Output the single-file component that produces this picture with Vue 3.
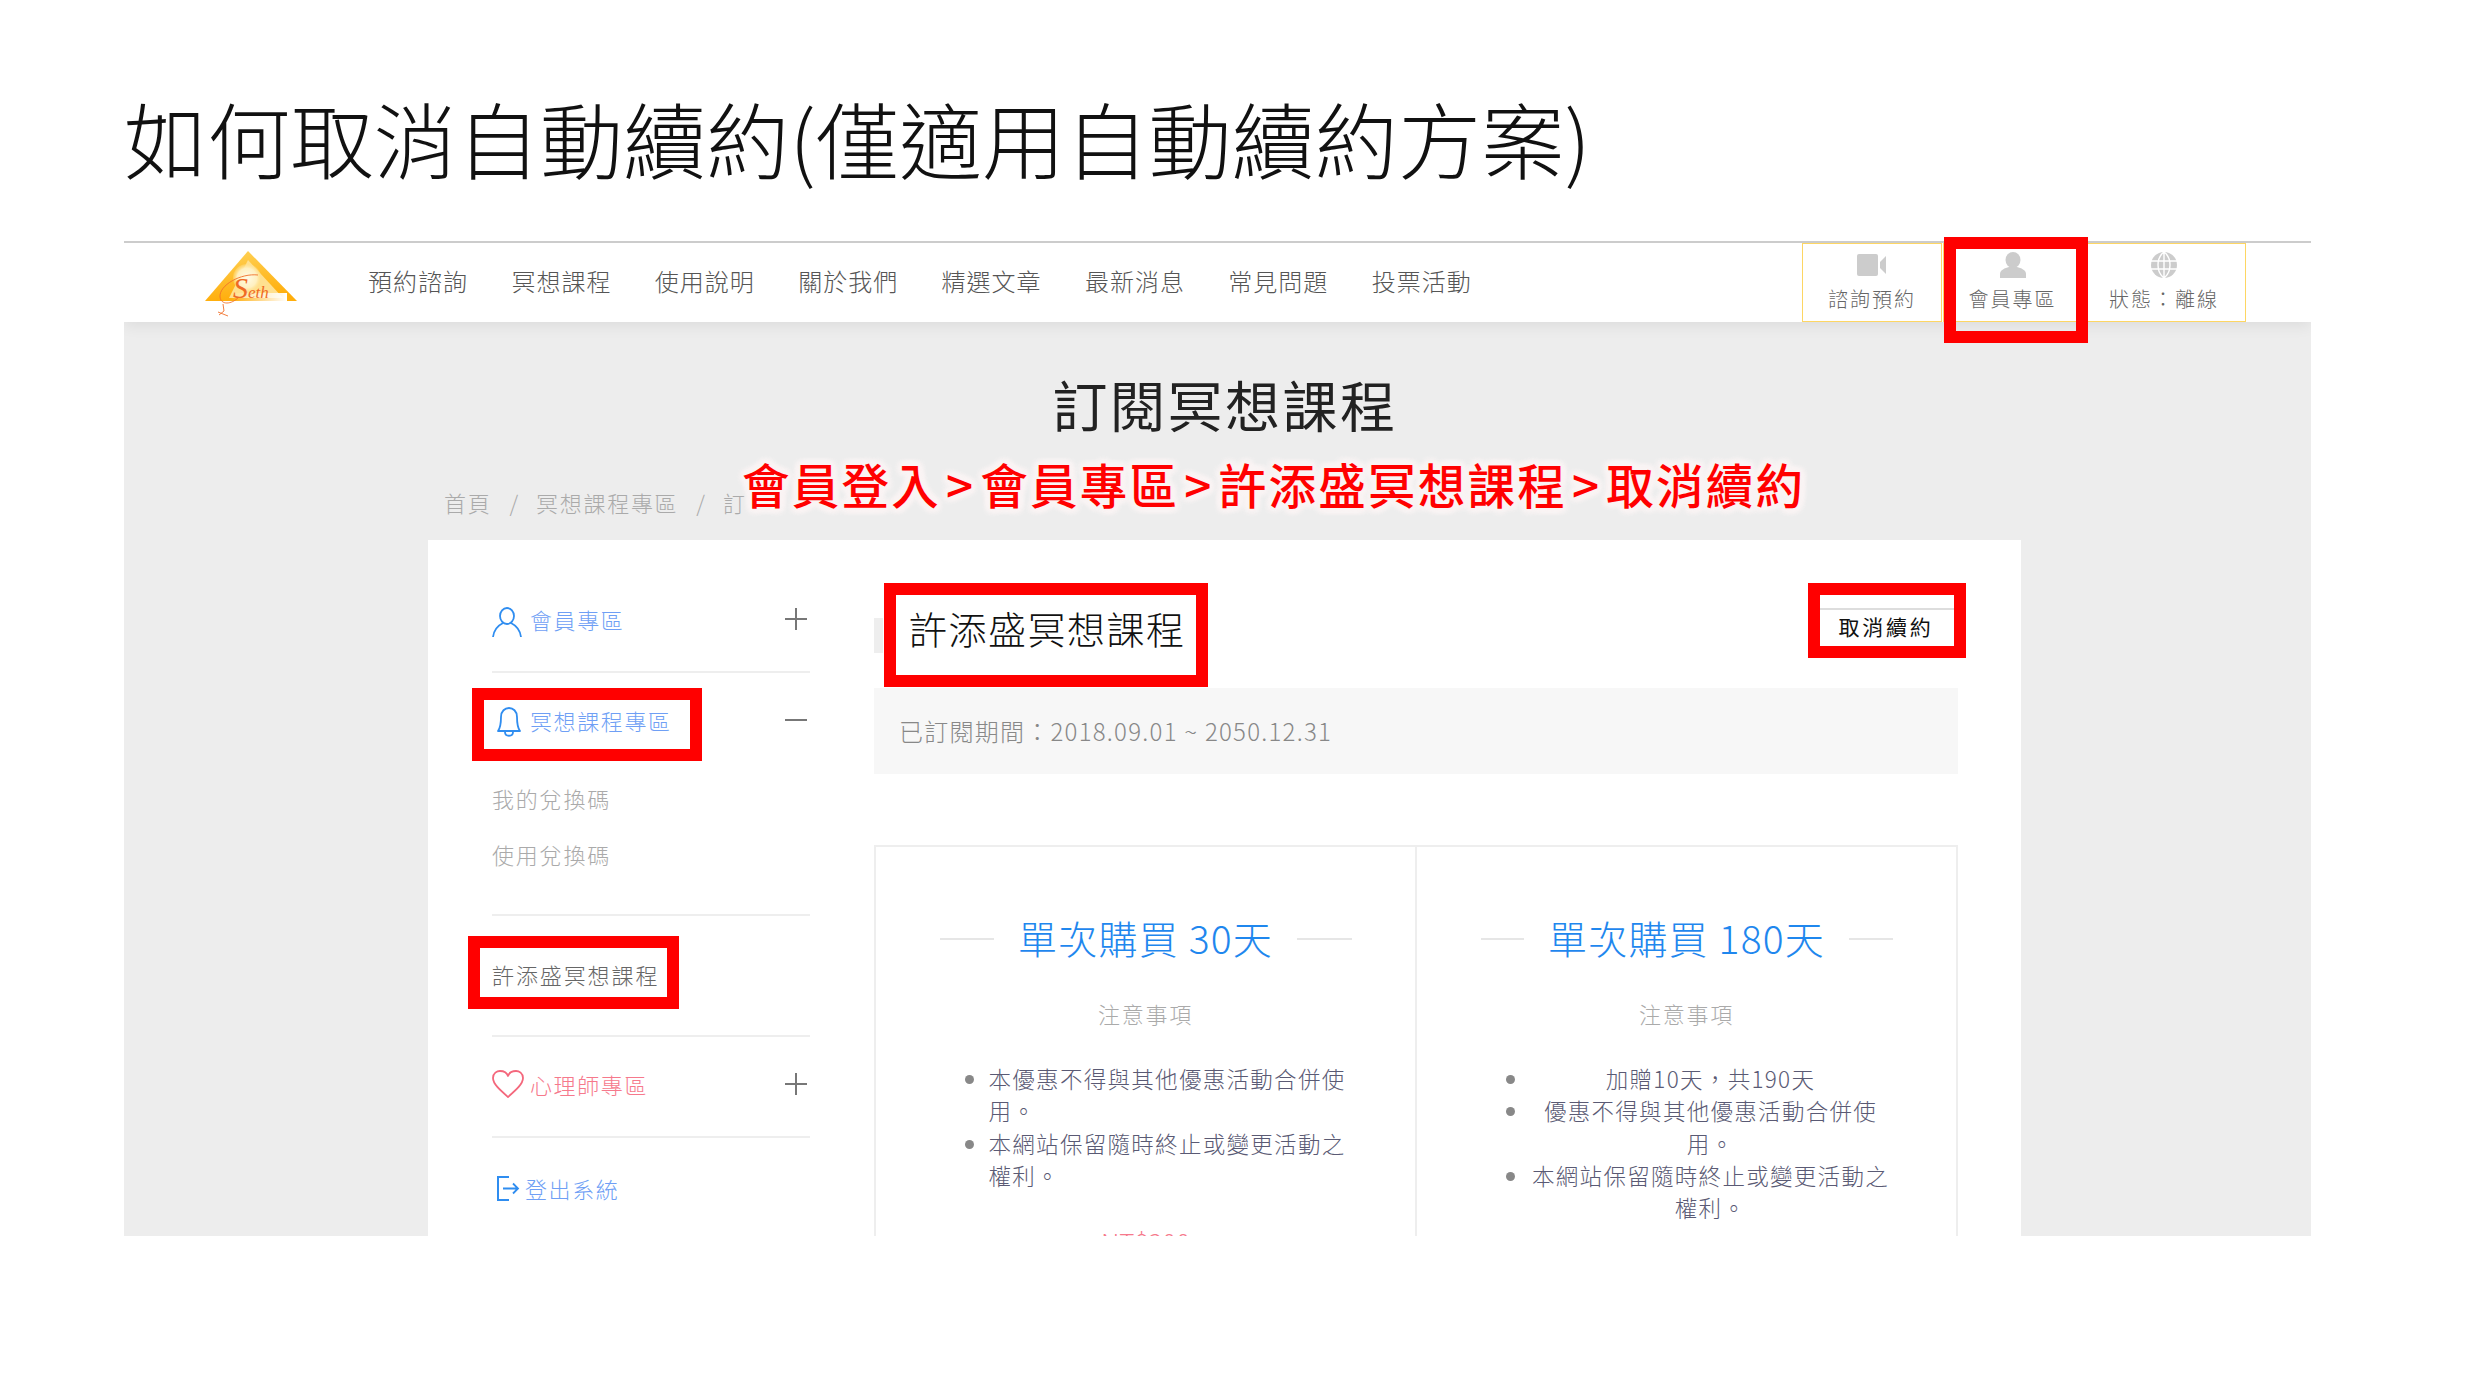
<script setup>
const navItems = ['預約諮詢', '冥想課程', '使用說明', '關於我們', '精選文章', '最新消息', '常見問題', '投票活動']
const plans = [
  { name: '單次購買 30天', centered: false, price: 'NT$300', notes: ['本優惠不得與其他優惠活動合併使用。', '本網站保留隨時終止或變更活動之權利。'] },
  { name: '單次購買 180天', centered: true, price: '', notes: ['加贈10天，共190天', '優惠不得與其他優惠活動合併使用。', '本網站保留隨時終止或變更活動之權利。'] }
]
const marks = ['box-a', 'box-b', 'box-c', 'box-d', 'box-e']
const steps = ['會員登入', '會員專區', '許添盛冥想課程', '取消續約']
</script>

<template>
  <div class="slide">
    <h1 class="slide-title">如何取消自動續約(僅適用自動續約方案)</h1>

    <div class="shot">
      <header class="topbar">
        <div class="logo">
          <svg width="110" height="70" viewBox="0 0 110 70">
            <defs>
              <linearGradient id="tri" x1="0" y1="0" x2="0.2" y2="1">
                <stop offset="0" stop-color="#ffd257" />
                <stop offset="1" stop-color="#ffae0c" />
              </linearGradient>
              <radialGradient id="sun">
                <stop offset="0" stop-color="#fffbe6" />
                <stop offset="0.7" stop-color="#fff0c0" />
                <stop offset="1" stop-color="#ffe08a" stop-opacity="0.4" />
              </radialGradient>
              <linearGradient id="fade" x1="0" y1="0" x2="1" y2="0">
                <stop offset="0" stop-color="#fff" stop-opacity="0" />
                <stop offset="1" stop-color="#fff" />
              </linearGradient>
            </defs>
            <polygon points="2,50 45,0 94,50" fill="url(#tri)" />
            <polygon points="45,9 80,47 26,47" fill="#ffe08f" />
            <circle cx="44" cy="27" r="14" fill="url(#sun)" />
            <rect x="28" y="42" width="56" height="8" fill="url(#fade)" />
            <path d="M55 24 C38 22 16 34 17 46 C18 54 28 54 36 46 M20 53 L21 60 L16 64 M15 61 L25 65" fill="none" stroke="#f0702a" stroke-width="0.9" />
            <text x="30" y="47" class="seth"><tspan class="seth-s">S</tspan>eth</text>
          </svg>
        </div>
        <nav class="nav">
          <a v-for="item in navItems" :key="item" class="nav-item">{{ item }}</a>
        </nav>
        <div class="quick">
          <a class="quick-btn q1">
            <svg width="30" height="24" viewBox="0 0 30 24"><rect x="0" y="1" width="21" height="22" rx="2" fill="#ccc" /><path d="M23 9 L29 3 V21 L23 15 Z" fill="#ccc" /></svg>
            <span>諮詢預約</span>
          </a>
          <a class="quick-btn q2">
            <svg width="26" height="26" viewBox="0 0 26 26"><ellipse cx="13" cy="8" rx="7.5" ry="8" fill="#ccc" /><path d="M0 26 V22 C0 18 5 16 9 15 H17 C21 16 26 18 26 22 V26 Z" fill="#ccc" /></svg>
            <span>會員專區</span>
          </a>
          <a class="quick-btn q3">
            <svg width="26" height="26" viewBox="0 0 26 26">
              <circle cx="13" cy="13" r="13" fill="#ccc" />
              <path d="M0 9 H26 M0 17 H26 M13 0 V26 M13 0 C5 6 5 20 13 26 M13 0 C21 6 21 20 13 26" fill="none" stroke="#fff" stroke-width="1.4" />
            </svg>
            <span>狀態：離線</span>
          </a>
        </div>
      </header>

      <section class="page">
        <h2 class="page-title">訂閱冥想課程</h2>
        <div class="crumbs">
          <span>首頁</span><i>/</i><span>冥想課程專區</span><i>/</i><span>訂</span>
        </div>

        <div class="panel">
          <aside class="side">
            <div class="side-row r1 blue">
              <svg class="ico" width="30" height="30" viewBox="0 0 30 30"><ellipse cx="15" cy="9" rx="7" ry="8" fill="none" stroke="#2f8df0" stroke-width="1.8" /><path d="M1 30 C2 22 7 18 11 16 M29 30 C28 22 23 18 19 16" fill="none" stroke="#2f8df0" stroke-width="1.8" /></svg>
              <span class="label">會員專區</span>
              <span class="plus"></span>
            </div>
            <div class="side-row r2 blue">
              <svg class="ico bell" width="26" height="30" viewBox="0 0 26 30"><path d="M2 24 C5 20 5 14 5 10 C5 4 9 1 13 1 C17 1 21 4 21 10 C21 14 21 20 24 24 Z" fill="none" stroke="#2f8df0" stroke-width="1.8" stroke-linejoin="round" /><path d="M9 25 C9 30 17 30 17 25" fill="none" stroke="#2f8df0" stroke-width="1.8" /></svg>
              <span class="label">冥想課程專區</span>
              <span class="minus"></span>
            </div>
            <div class="sub-list">
              <a class="sub">我的兌換碼</a>
              <a class="sub">使用兌換碼</a>
            </div>
            <div class="side-row r3">
              <span class="course">許添盛冥想課程</span>
            </div>
            <div class="side-row r4 pink">
              <svg class="ico" width="32" height="28" viewBox="0 0 32 28"><path d="M16 27 C8 20 1 14 1 8 C1 3 5 1 8 1 C12 1 15 3 16 6 C17 3 20 1 24 1 C27 1 31 3 31 8 C31 14 24 20 16 27 Z" fill="none" stroke="#f4677c" stroke-width="1.8" stroke-linejoin="round" /></svg>
              <span class="label narrow">心理師專區</span>
              <span class="plus"></span>
            </div>
            <div class="side-row r5 blue">
              <svg class="ico out" width="24" height="25" viewBox="0 0 24 25"><path d="M13 1 H2 V24 H13" fill="none" stroke="#2f8df0" stroke-width="2" /><path d="M7 12.5 H22 M17 7.5 L22 12.5 L17 17.5" fill="none" stroke="#2f8df0" stroke-width="1.8" /></svg>
              <span class="label tight">登出系統</span>
            </div>
          </aside>

          <main class="main">
            <div class="main-head">
              <span class="tab-edge"></span>
              <h3 class="main-title">許添盛冥想課程</h3>
              <button class="cancel">取消續約</button>
            </div>
            <div class="period">已訂閱期間：2018.09.01 ~ 2050.12.31</div>
            <div class="plans">
              <article v-for="plan in plans" :key="plan.name" class="plan">
                <div class="plan-name"><span class="rule"></span><span>{{ plan.name }}</span><span class="rule"></span></div>
                <div class="plan-note">注意事項</div>
                <ul class="notes" :class="{ centered: plan.centered }">
                  <li v-for="note in plan.notes" :key="note">{{ note }}</li>
                </ul>
                <div v-if="plan.price" class="price">{{ plan.price }}</div>
              </article>
            </div>
          </main>
        </div>
      </section>
    </div>

    <div class="callout">
      <template v-for="(step, i) in steps" :key="step"><span v-if="i" class="arrow">&gt;</span>{{ step }}</template>
    </div>
    <div v-for="m in marks" :key="m" class="mark" :class="m"></div>
  </div>
</template>

<style scoped>
.slide {
  position: relative;
  width: 2480px;
  height: 1382px;
  overflow: hidden;
  background: #fff;
  font-family: "Noto Sans CJK TC", "Noto Sans", sans-serif;
  font-weight: 300;
}
.slide-title {
  margin: 87px 0 54px 124px;
  font-size: 83.2px;
  line-height: 100px;
  font-weight: 300;
  color: #111;
  white-space: nowrap;
}
.shot {
  width: 2187px;
  height: 995px;
  margin-left: 124px;
  overflow: hidden;
  background: #ededed;
  border-top: 2px solid #ccc;
  box-sizing: border-box;
}
.topbar {
  position: relative;
  display: flex;
  align-items: flex-start;
  height: 79px;
  background: #fff;
  box-shadow: 0 4px 14px rgba(0, 0, 0, 0.07);
}
.logo {
  width: 244px;
  padding: 8px 0 0 79px;
  box-sizing: border-box;
  height: 79px;
}
.seth {
  font-family: "Liberation Serif", serif;
  font-style: italic;
  font-size: 17px;
  fill: #ef6a24;
}
.seth-s {
  font-size: 30px;
}
.nav {
  display: flex;
  gap: 43.4px;
  flex: 1;
  height: 74px;
  align-items: center;
}
.nav-item {
  font-size: 24px;
  letter-spacing: 1px;
  color: #555;
  white-space: nowrap;
}
.quick {
  display: flex;
  margin-right: 65px;
}
.quick-btn {
  display: flex;
  flex-direction: column;
  align-items: center;
  height: 79px;
  box-sizing: border-box;
  border: 1px solid #fdd663;
  padding-top: 8px;
  font-size: 20px;
  letter-spacing: 2px;
  color: #666;
}
.quick-btn svg { display: block; height: 26px; }
.quick-btn span { margin-top: 6px; line-height: 30px; white-space: nowrap; }
.q1 { width: 140px; margin-right: 1px; }
.q2 { width: 139px; }
.q3 { width: 164px; }

.page {
  padding-top: 46px;
}
.page-title {
  margin: 0;
  padding-left: 15px;
  text-align: center;
  font-size: 55px;
  line-height: 70px;
  letter-spacing: 2.5px;
  font-weight: 400;
  color: #222;
}
.crumbs {
  display: flex;
  margin: 49px 0 23px 320px;
  font-size: 22px;
  line-height: 30px;
  letter-spacing: 1.7px;
  color: #aaa;
}
.crumbs i {
  font-style: normal;
  margin: 0 18px;
  letter-spacing: 0;
}
.panel {
  display: flex;
  gap: 64px;
  width: 1593px;
  margin-left: 304px;
  padding: 29px 63px 0 64px;
  box-sizing: border-box;
  background: #fff;
  min-height: 800px;
}
.side {
  width: 318px;
  flex: none;
  font-size: 22px;
}
.side-row {
  display: flex;
  align-items: center;
  border-bottom: 2px solid #eee;
  box-sizing: border-box;
  position: relative;
}
.r1 { height: 104px; padding-bottom: 2px; }
.r1 .ico { margin-top: 6px; }
.r2 { height: 97px; border-bottom: 0; padding-bottom: 3px; }
.r2 .ico { margin-top: 3px; }
.r3 { height: 123px; border-top: 2px solid #eee; padding-bottom: 3px; }
.r4 { height: 101px; padding-bottom: 6px; }
.r5 { height: 102px; border-bottom: 0; padding-left: 4px; padding-bottom: 2px; }
.blue { color: #6f9ff5; }
.pink { color: #f6798c; }
.ico { flex: none; display: block; }
.bell { margin-left: 4px; margin-right: 8px; }
.out { margin-right: 5px; }
.label {
  margin-left: 8px;
  letter-spacing: 1.6px;
  white-space: nowrap;
}
.label.narrow { margin-left: 6px; }
.bell + .label { margin-left: 0; }
.label.tight { margin-left: 0; }
.plus, .minus {
  position: relative;
  width: 22px;
  height: 22px;
  margin-left: auto;
  margin-right: 3px;
}
.plus::before, .minus::before {
  content: "";
  position: absolute;
  left: 0;
  right: 0;
  top: 10px;
  height: 2px;
  background: #777;
}
.plus::after {
  content: "";
  position: absolute;
  top: 0;
  bottom: 0;
  left: 10px;
  width: 2px;
  background: #777;
}
.sub-list {
  padding-bottom: 32px;
}
.sub {
  display: block;
  line-height: 56px;
  font-size: 22px;
  letter-spacing: 1.8px;
  color: #aaa;
}
.course {
  font-size: 22px;
  letter-spacing: 1.9px;
  color: #666;
}

.main {
  flex: 1;
  min-width: 0;
}
.main-head {
  display: flex;
  align-items: flex-start;
  height: 120px;
  margin-top: 5px;
  box-sizing: border-box;
  padding-top: 34px;
}
.tab-edge {
  width: 9px;
  height: 35px;
  margin-top: 10px;
  background: #eee;
}
.main-title {
  margin: -9px 0 0 26px;
  font-size: 38px;
  line-height: 58px;
  letter-spacing: 1.5px;
  font-weight: 300;
  color: #111;
}
.cancel {
  margin-left: auto;
  margin-right: 4px;
  width: 134px;
  height: 46px;
  padding: 0 2px 12px 0;
  background: #fff;
  border: 0;
  border-top: 2px solid #ddd;
  font-family: inherit;
  font-size: 21px;
  font-weight: 400;
  letter-spacing: 2.7px;
  color: #111;
}
.period {
  height: 86px;
  line-height: 86px;
  margin-top: -6px;
  padding-left: 25px;
  background: #f7f7f7;
  font-size: 24px;
  letter-spacing: 1.25px;
  color: #888;
}
.plans {
  display: flex;
  margin-top: 71px;
  border: 2px solid #eee;
  border-bottom: 0;
  height: 500px;
}
.plan {
  flex: 1;
  min-width: 0;
  padding-top: 62px;
  display: flex;
  flex-direction: column;
  align-items: center;
}
.plan + .plan {
  border-left: 2px solid #eee;
}
.plan-name {
  display: flex;
  align-items: center;
  gap: 24px;
  width: 412px;
  font-size: 39px;
  line-height: 56px;
  letter-spacing: 1.2px;
  color: #1f87ee;
  white-space: nowrap;
  justify-content: center;
}
.rule {
  flex: 1;
  height: 2px;
  margin-top: 4px;
  background: #e6e6e6;
}
.plan-note {
  margin-top: 31px;
  font-size: 22px;
  line-height: 34px;
  letter-spacing: 1.7px;
  color: #aaa;
}
.notes {
  width: 362px;
  margin: 32px 0 0 48px;
  padding: 0;
  font-size: 22.5px;
  line-height: 32.3px;
  letter-spacing: 1.3px;
  color: #5a5a74;
}
.notes li::marker { color: #888; }
.notes.centered { text-align: center; }
.price {
  margin-top: 31px;
  font-size: 26px;
  line-height: 40px;
  color: #f6798c;
}

.callout {
  position: absolute;
  left: 742px;
  top: 454px;
  font-size: 47.5px;
  line-height: 60px;
  font-weight: 500;
  letter-spacing: 2.25px;
  color: #f00;
  white-space: nowrap;
  text-shadow:
    0 0 6px #faf4f4, 0 0 6px #faf4f4, 0 0 6px #faf4f4,
    5px 0 4px #faf4f4, -5px 0 4px #faf4f4, 0 5px 4px #faf4f4, 0 -5px 4px #faf4f4,
    4px 4px 4px #faf4f4, -4px 4px 4px #faf4f4, 4px -4px 4px #faf4f4, -4px -4px 4px #faf4f4;
}
.arrow {
  margin: 0 5px;
}
.mark {
  position: absolute;
  box-sizing: border-box;
  border: 12px solid #f00;
}
.box-a { left: 1944px; top: 237px; width: 144px; height: 106px; }
.box-b { left: 472px; top: 688px; width: 230px; height: 73px; }
.box-c { left: 468px; top: 936px; width: 211px; height: 73px; }
.box-d { left: 884px; top: 583px; width: 324px; height: 104px; }
.box-e { left: 1808px; top: 583px; width: 158px; height: 75px; }
</style>

<style>
html, body { margin: 0; background: #fff; }
</style>
